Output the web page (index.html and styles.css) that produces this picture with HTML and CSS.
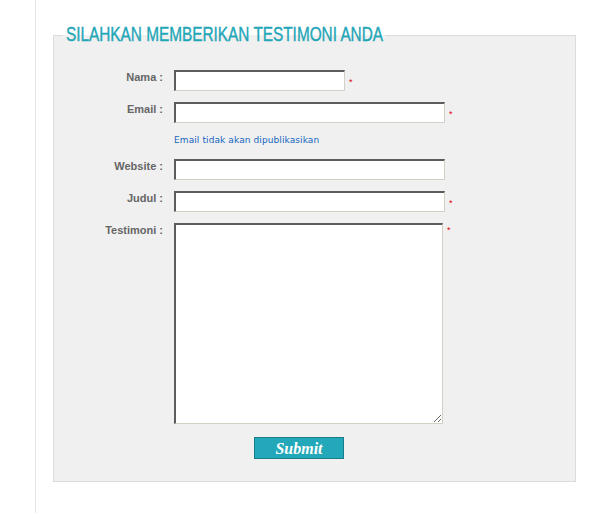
FILE: index.html
```html
<!DOCTYPE html>
<html lang="id">
<head>
    <meta charset="UTF-8">
    <title>Testimoni</title>
    <link rel="stylesheet" href="styles.css">
</head>
<body>

<div class="page">
    <fieldset class="testi-box">
        <legend><span class="testi-title">SILAHKAN MEMBERIKAN TESTIMONI ANDA</span></legend>

        <form class="testi-form" onsubmit="return false;">
            <div class="row">
                <label for="nama">Nama :</label>
                <input type="text" id="nama" class="field short">
                <span class="req">*</span>
            </div>
            <div class="row">
                <label for="email">Email :</label>
                <input type="text" id="email" class="field">
                <span class="req">*</span>
            </div>
            <div class="note">Email tidak akan dipublikasikan</div>
            <div class="row">
                <label for="website">Website :</label>
                <input type="text" id="website" class="field">
            </div>
            <div class="row">
                <label for="judul">Judul :</label>
                <input type="text" id="judul" class="field">
                <span class="req">*</span>
            </div>
            <div class="row row-area">
                <label for="testimoni">Testimoni :</label>
                <textarea id="testimoni" class="field area"></textarea>
                <span class="req">*</span>
            </div>
            <div class="actions">
                <button type="submit" class="btn">Submit</button>
            </div>
        </form>
    </fieldset>
</div>

</body>
</html>
```

FILE: styles.css
```css
body {
    margin: 0;
    background: #fff;
    font-family: 'Liberation Sans', Arial, sans-serif;
}
.page {
    margin-left: 35px;
    border-left: 1px solid #e4e4e4;
    min-height: 513px;
    padding: 25px 0 0 17px;
    box-sizing: border-box;
}
.testi-box {
    width: 523px;
    box-sizing: border-box;
    margin: 0;
    padding: 0;
    border: 1px solid #dcdcdc;
    background: #f0f0f0;
}
.testi-box legend {
    margin-left: 9px;
    padding: 0 1px 0 3px;
    line-height: 18px;
}
.testi-title {
    display: inline-block;
    width: 318px;
    white-space: nowrap;
    font-size: 21px;
    color: #1fa6b7;
    -webkit-text-stroke: 0.4px #1fa6b7;
    transform: scaleX(0.731);
    transform-origin: left center;
}
.testi-form {
    padding: 25px 0 22px 0;
}
.row {
    display: flex;
    align-items: flex-start;
    margin-bottom: 11px;
}
.row label {
    width: 109px;
    margin-right: 11px;
    padding-top: 1px;
    text-align: right;
    font-size: 11px;
    line-height: 13px;
    font-weight: bold;
    color: #666;
}
.field {
    width: 271px;
    height: 21px;
    box-sizing: border-box;
    margin: 0;
    padding: 1px 3px;
    background: #fff;
    border-top: 2px solid #5c5c5c;
    border-left: 2px solid #5c5c5c;
    border-right: 1px solid #d4d0c8;
    border-bottom: 1px solid #d4d0c8;
    font: 12px 'Liberation Sans', Arial, sans-serif;
    outline: none;
}
.field.short {
    width: 171px;
}
.field.area {
    width: 269px;
    height: 201px;
}
.req {
    margin-left: 4px;
    margin-top: 8px;
    font-size: 9px;
    line-height: 9px;
    color: #e00000;
}
.row-area {
    margin-bottom: 13px;
}
.row-area .req {
    margin-top: 3px;
}
.row:nth-child(2) {
    margin-bottom: 12px;
}
.note {
    padding-left: 120px;
    margin-bottom: 13px;
    font-family: 'DejaVu Sans', Verdana, sans-serif;
    font-size: 9px;
    line-height: 11px;
    letter-spacing: 0.1px;
    color: #1565c0;
}
.actions {
    padding-left: 200px;
}
.btn {
    display: block;
    width: 90px;
    height: 22px;
    margin: 0;
    padding: 0;
    background: #22a8b8;
    border: 1px solid #187e8a;
    color: #fff;
    font-family: 'Liberation Serif', 'Times New Roman', serif;
    font-style: italic;
    font-weight: bold;
    font-size: 16px;
    line-height: 19px;
    cursor: pointer;
}
```
